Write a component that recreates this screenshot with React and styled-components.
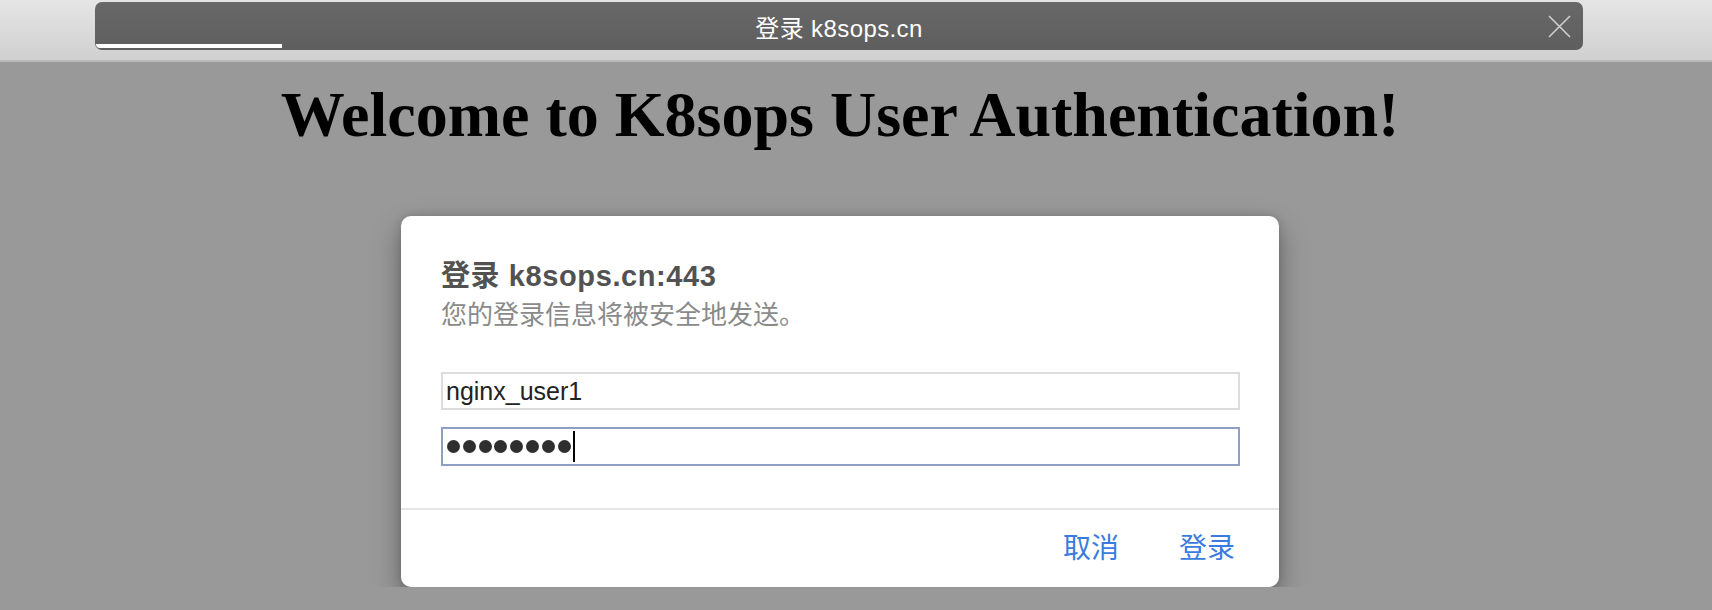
import { createGlobalStyle, styled } from "styled-components";

const GlobalStyle = createGlobalStyle`
  body {
    margin: 0;
    background: #999999;
    font-family: "Liberation Sans", "Noto Sans CJK SC", sans-serif;
  }
`;

const Chrome = styled.header`
  height: 62px;
  padding: 2px 0 0 95px;
  box-sizing: border-box;
  background: linear-gradient(#e5e5e5, #d0d0d0);
  border-bottom: 2px solid #bababa;
`;

const Tab = styled.div`
  position: relative;
  width: 1488px;
  height: 48px;
  border-radius: 7px;
  background: linear-gradient(#686868, #5e5e5e);
  display: flex;
  align-items: center;
  justify-content: center;
  color: #ffffff;
  font-size: 24px;
  letter-spacing: 0.4px;
`;

const Progress = styled.div`
  position: absolute;
  left: 1px;
  bottom: 2px;
  width: 186px;
  height: 4px;
  background: #ffffff;
  border-bottom-left-radius: 6px;
`;

const CloseButton = styled.button`
  position: absolute;
  right: 12px;
  top: 13px;
  width: 23px;
  height: 23px;
  padding: 0;
  border: none;
  background: none;
  display: flex;
`;

const Main = styled.main`
  width: 1680px;
`;

const Heading = styled.h1`
  margin: 16px 0 0;
  text-align: center;
  font-family: "Liberation Serif", serif;
  font-weight: bold;
  font-size: 64px;
  line-height: 74px;
  color: #000000;
`;

const Dialog = styled.section`
  width: 878px;
  margin: 64px auto 0;
  background: #ffffff;
  border-radius: 10px;
  box-shadow: 0 12px 28px rgba(0, 0, 0, 0.35), 0 0 8px rgba(0, 0, 0, 0.15);
  overflow: hidden;
`;

const DialogBody = styled.div`
  padding: 42px 39px 42px 40px;
  border-bottom: 2px solid #e6e6e6;
`;

const Title = styled.h2`
  margin: 0;
  font-size: 29px;
  line-height: 36px;
  font-weight: bold;
  letter-spacing: 0.6px;
  color: #525252;
`;

const Subtitle = styled.p`
  margin: 5px 0 0;
  font-size: 26px;
  line-height: 32px;
  color: #8a8a8a;
`;

const Fields = styled.div`
  margin-top: 41px;
  display: flex;
  flex-direction: column;
  gap: 17px;
`;

const Field = styled.div`
  height: ${({ $focused }) => ($focused ? "39px" : "38px")};
  box-sizing: border-box;
  border: 2px solid ${({ $focused }) => ($focused ? "#8e9ec4" : "#dcdcdc")};
  padding: 0 2px 0 3px;
  display: flex;
  align-items: center;
  font-size: 25px;
  color: #222222;
`;

const Dot = styled.span`
  width: 13px;
  height: 13px;
  margin-right: 2.8px;
  border-radius: 50%;
  background: #2e2e2e;
  &:first-child {
    margin-left: 1px;
  }
`;

const Caret = styled.span`
  width: 2px;
  height: 31px;
  background: #000000;
`;

const Footer = styled.div`
  height: 77px;
  padding-right: 44px;
  display: flex;
  align-items: center;
  justify-content: flex-end;
  gap: 60px;
`;

const ActionButton = styled.button`
  padding: 0;
  border: none;
  background: none;
  font-family: "Liberation Sans", "Noto Sans CJK SC", sans-serif;
  font-size: 28px;
  line-height: 32px;
  color: #3a7be0;
  cursor: pointer;
`;

export default function App() {
  const passwordLength = 8;

  return (
    <>
      <GlobalStyle />
      <Chrome>
        <Tab>
          登录 k8sops.cn
          <Progress />
          <CloseButton aria-label="关闭">
            <svg width="23" height="23" viewBox="0 0 23 23">
              <path
                d="M1 1 L22 22 M22 1 L1 22"
                stroke="#cfcfcf"
                strokeWidth="1.6"
                fill="none"
              />
            </svg>
          </CloseButton>
        </Tab>
      </Chrome>
      <Main>
        <Heading>Welcome to K8sops User Authentication!</Heading>
        <Dialog>
          <DialogBody>
            <Title>登录 k8sops.cn:443</Title>
            <Subtitle>您的登录信息将被安全地发送。</Subtitle>
            <Fields>
              <Field>nginx_user1</Field>
              <Field $focused>
                {Array.from({ length: passwordLength }, (_, i) => (
                  <Dot key={i} />
                ))}
                <Caret />
              </Field>
            </Fields>
          </DialogBody>
          <Footer>
            <ActionButton>取消</ActionButton>
            <ActionButton>登录</ActionButton>
          </Footer>
        </Dialog>
      </Main>
    </>
  );
}
